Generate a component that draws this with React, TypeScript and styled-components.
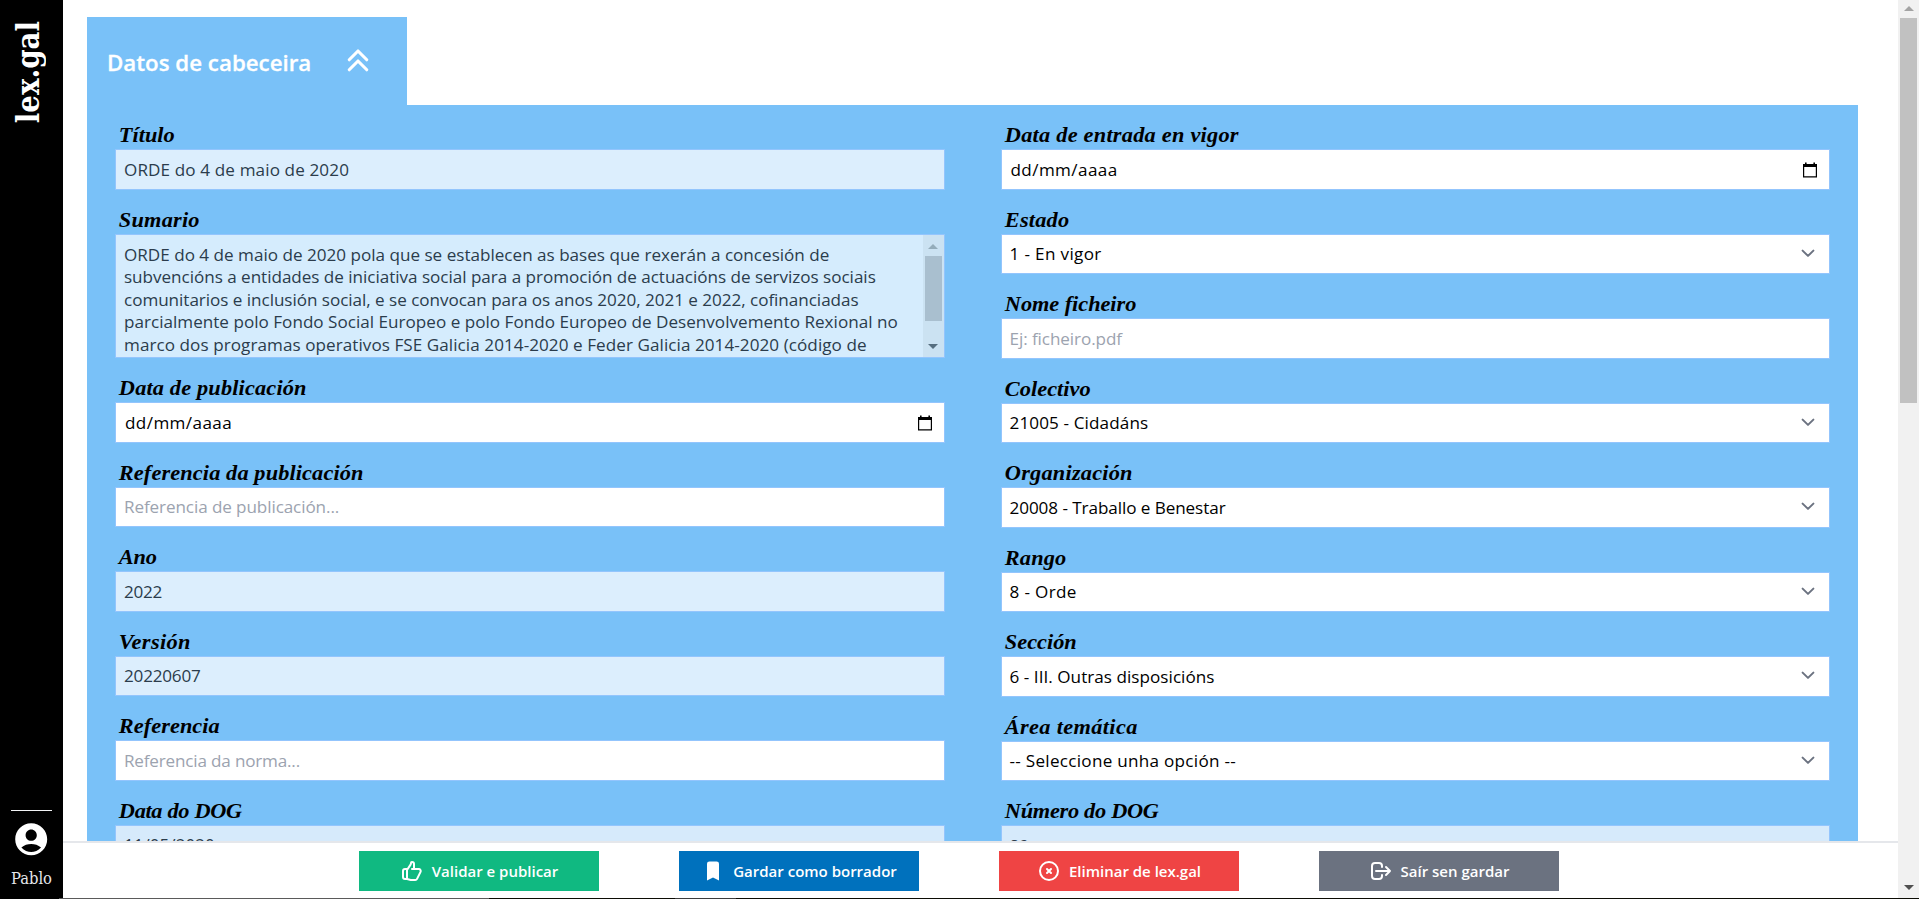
import React from "react";
import styled, { createGlobalStyle } from "styled-components";
import {
  HiBookmark,
  HiOutlineChevronDoubleUp,
  HiOutlineLogout,
  HiOutlineThumbUp,
  HiOutlineXCircle,
} from "react-icons/hi";
import { MdAccountCircle } from "react-icons/md";

const GlobalStyle = createGlobalStyle`
  *, *::before, *::after { box-sizing: border-box; }
  body { margin: 0; background: #fff; overflow: hidden; font-family: "Open Sans", "Noto Sans", sans-serif; }
`;

const Screen = styled.div`
  display: flex;
  flex-direction: column;
  width: 100vw;
  height: 100vh;
`;

const Workspace = styled.div`
  display: flex;
  flex: 1;
  min-height: 0;
`;

const Sidebar = styled.aside`
  display: flex;
  flex-direction: column;
  align-items: center;
  justify-content: space-between;
  width: 63px;
  background: #000;
  color: #fff;
  padding: 21px 0 7px;
`;

const Logo = styled.div`
  writing-mode: vertical-rl;
  transform: rotate(180deg);
  margin-right: 7px;
  font: 700 30.8px/36px "DejaVu Serif Condensed", "DejaVu Serif", serif;
  white-space: nowrap;
`;

const User = styled.div`
  display: flex;
  flex-direction: column;
  align-items: center;
  width: 41px;
  border-top: 1px solid #f3f4f6;
  padding-top: 9px;
  color: #e5e7eb;
  font: 400 16.4px/24px "DejaVu Serif Condensed", "DejaVu Serif", serif;

  svg { color: #fff; margin-bottom: 9px; flex: none; }
`;

const Main = styled.main`
  display: flex;
  flex-direction: column;
  flex: 1;
  min-width: 0;
`;

const Content = styled.div`
  flex: 1;
  min-height: 0;
  overflow: hidden;
  padding: 17px 40px 0 24px;
`;

const Tab = styled.header`
  display: flex;
  align-items: center;
  width: 320px;
  height: 88px;
  padding: 1px 34px 0 20px;
  justify-content: space-between;
  background: #79c1f8;
  color: #fff;

  svg { margin-bottom: 2px; }
`;

const TabTitle = styled.h1`
  margin: 2px 0 0;
  font-size: 22.3px;
  font-weight: 600;
  line-height: 32px;
  white-space: nowrap;
  -webkit-text-stroke: 0.3px #fff;
`;

const Panel = styled.section`
  display: grid;
  grid-template-columns: 1fr 1fr;
  column-gap: 56px;
  padding: 16px 28px;
  background: #79c1f8;
`;

const Column = styled.div`
  display: flex;
  flex-direction: column;
  gap: 16px;
`;

const Field = styled.div``;

const Label = styled.label<{ $spacing: number }>`
  display: block;
  height: 28px;
  padding-left: 3.5px;
  font: italic 700 20.3px/29px "Liberation Serif", serif;
  letter-spacing: ${(p) => p.$spacing}px;
  transform: scaleX(1.1);
  transform-origin: left;
  color: #000;
  white-space: nowrap;
`;

type Tone = "plain" | "locked" | "hint" | "dim";
const backgrounds: Record<Tone, string> = { plain: "#fff", hint: "#fff", locked: "#dceefd", dim: "#d6eafb" };
const colors: Record<Tone, string> = { plain: "#000", hint: "#9ca3af", locked: "#2b3c4c", dim: "#2b3c4c" };

const Box = styled.div<{ $tone: Tone }>`
  display: flex;
  align-items: center;
  justify-content: space-between;
  height: 40.5px;
  padding: 1.2px 12px 0 8px;
  border: 1px solid #93c5fd;
  background: ${(p) => backgrounds[p.$tone]};
  color: ${(p) => colors[p.$tone]};
  font-size: 17.1px;
  line-height: 24px;
  white-space: nowrap;
`;

const Value = styled.span<{ $spacing?: number; $date?: boolean }>`
  margin-left: ${(p) => (p.$date ? 1 : 0)}px;
  letter-spacing: ${(p) => p.$spacing ?? 0}px;
`;

const TextArea = styled.div`
  display: flex;
  height: 124.5px;
  overflow: hidden;
  border: 1px solid #93c5fd;
  background: #d5ecfd;
  color: #2b3c4c;
`;

const TextLines = styled.div`
  flex: 1;
  padding: 9px 0 0 8px;
  font-size: 17.1px;
  line-height: 22.6px;
  white-space: nowrap;
`;

const Line = styled.div<{ $spacing: number }>`
  letter-spacing: ${(p) => p.$spacing}px;
`;

const Scrollbar = styled.div<{ $inner?: boolean }>`
  display: flex;
  flex-direction: column;
  align-items: center;
  flex: none;
  width: 21px;
  padding: ${(p) => (p.$inner ? "9px 0 8px" : "6px 0 8px")};
  background: ${(p) => (p.$inner ? "#cbe2f2" : "#f1f1f1")};
`;

const Thumb = styled.div<{ $inner?: boolean }>`
  width: 17px;
  height: ${(p) => (p.$inner ? 65 : 385)}px;
  margin: 7px 0 auto;
  background: ${(p) => (p.$inner ? "#a9bfcf" : "#c1c1c1")};
`;

const Arrow = styled.i<{ $down?: boolean; $color: string }>`
  border: 5px solid transparent;
  border-top: ${(p) => (p.$down ? `5px solid ${p.$color}` : "0")};
  border-bottom: ${(p) => (p.$down ? "0" : `5px solid ${p.$color}`)};
`;

const ActionBar = styled.footer`
  display: flex;
  justify-content: center;
  gap: 80px;
  height: 57px;
  border-top: 2px solid #e5e7eb;
  padding-top: 8px;
  padding-right: 43px;
  background: #fff;
`;

const Action = styled.button<{ $bg: string }>`
  display: flex;
  align-items: center;
  justify-content: center;
  gap: 8px;
  width: 240px;
  height: 40px;
  border: 0;
  padding: 0;
  background: ${(p) => p.$bg};
  color: #fff;
  font: 600 15px/24px "Open Sans", sans-serif;
  white-space: nowrap;
`;

const BottomEdge = styled.div`
  height: 1px;
  background: linear-gradient(to right, #000 59px, #5a5a5a 59px 489px, #0c0c04 489px 675px, #3c3c3c 675px 736px, #0c0c04 736px);
`;

const CalendarIcon = () => (
  <svg width="14" height="16" viewBox="0 0 14 16">
    <path d="M0 2h14v13.5H0zM1.2 5v9.3h11.6V5z" fill="#000" fillRule="evenodd" />
    <path d="M2 .5h1.6V2H2zM10.4.5H12V2h-1.6z" fill="#000" />
  </svg>
);

const ChevronIcon = () => (
  <svg width="14" height="9" viewBox="0 0 14 9" fill="none" stroke="#6b7280" strokeWidth="2" strokeLinecap="round" strokeLinejoin="round">
    <path d="M1.6 1.6 7 6.9l5.4-5.3" />
  </svg>
);

const ChevronSlot = styled.span`
  display: flex;
  margin: -2px 2px 0 0;
`;

type FieldData = {
  label: string;
  spacing: number;
  value?: string;
  valueSpacing?: number;
  tone?: Tone;
  icon?: "date" | "select";
  lines?: [string, number][];
};

const left: FieldData[] = [
  { label: "Título", spacing: 0.02, value: "ORDE do 4 de maio de 2020", valueSpacing: 0.12, tone: "locked" },
  {
    label: "Sumario",
    spacing: 0.2,
    lines: [
      ["ORDE do 4 de maio de 2020 pola que se establecen as bases que rexerán a concesión de", 0],
      ["subvencións a entidades de iniciativa social para a promoción de actuacións de servizos sociais", -0.03],
      ["comunitarios e inclusión social, e se convocan para os anos 2020, 2021 e 2022, cofinanciadas", -0.04],
      ["parcialmente polo Fondo Social Europeo e polo Fondo Europeo de Desenvolvemento Rexional no", 0.01],
      ["marco dos programas operativos FSE Galicia 2014-2020 e Feder Galicia 2014-2020 (código de", 0.06],
    ],
  },
  { label: "Data de publicación", spacing: 0.15, value: "dd/mm/aaaa", valueSpacing: 0.4, icon: "date" },
  { label: "Referencia da publicación", spacing: 0.11, value: "Referencia de publicación...", valueSpacing: -0.1, tone: "hint" },
  { label: "Ano", spacing: -0.15, value: "2022", valueSpacing: -0.25, tone: "locked" },
  { label: "Versión", spacing: 0.32, value: "20220607", valueSpacing: -0.2, tone: "locked" },
  { label: "Referencia", spacing: 0.05, value: "Referencia da norma...", valueSpacing: -0.18, tone: "hint" },
  { label: "Data do DOG", spacing: -0.29, value: "11/05/2020", tone: "dim" },
];

const right: FieldData[] = [
  { label: "Data de entrada en vigor", spacing: 0.22, value: "dd/mm/aaaa", valueSpacing: 0.4, icon: "date" },
  { label: "Estado", spacing: 0.18, value: "1 - En vigor", valueSpacing: 0.35, icon: "select" },
  { label: "Nome ficheiro", spacing: -0.04, value: "Ej: ficheiro.pdf", valueSpacing: -0.08, tone: "hint" },
  { label: "Colectivo", spacing: 0.04, value: "21005 - Cidadáns", valueSpacing: 0.12, icon: "select" },
  { label: "Organización", spacing: 0.2, value: "20008 - Traballo e Benestar", valueSpacing: -0.07, icon: "select" },
  { label: "Rango", spacing: 0.12, value: "8 - Orde", valueSpacing: 0.35, icon: "select" },
  { label: "Sección", spacing: 0, value: "6 - III. Outras disposicións", valueSpacing: 0.04, icon: "select" },
  { label: "Área temática", spacing: 0.32, value: "-- Seleccione unha opción --", valueSpacing: 0.28, icon: "select" },
  { label: "Número do DOG", spacing: -0.25, value: "89", tone: "dim" },
];

const FormField = ({ data }: { data: FieldData }) => (
  <Field>
    <Label $spacing={data.spacing}>{data.label}</Label>
    {data.lines ? (
      <TextArea>
        <TextLines>
          {data.lines.map(([text, spacing]) => (
            <Line key={text} $spacing={spacing}>{text}</Line>
          ))}
        </TextLines>
        <Scrollbar $inner>
          <Arrow $color="#94acba" />
          <Thumb $inner />
          <Arrow $down $color="#566e80" />
        </Scrollbar>
      </TextArea>
    ) : (
      <Box $tone={data.tone ?? "plain"}>
        <Value $spacing={data.valueSpacing} $date={data.icon === "date"}>{data.value}</Value>
        {data.icon === "date" && <CalendarIcon />}
        {data.icon === "select" && <ChevronSlot><ChevronIcon /></ChevronSlot>}
      </Box>
    )}
  </Field>
);

export default function App() {
  return (
    <Screen>
      <GlobalStyle />
      <Workspace>
        <Sidebar>
          <Logo>lex.gal</Logo>
          <User>
            <MdAccountCircle size={38.4} />
            Pablo
          </User>
        </Sidebar>
        <Main>
          <Content>
            <Tab>
              <TabTitle>Datos de cabeceira</TabTitle>
              <HiOutlineChevronDoubleUp size={30} strokeWidth={2.5} />
            </Tab>
            <Panel>
              <Column>{left.map((f) => <FormField key={f.label} data={f} />)}</Column>
              <Column>{right.map((f) => <FormField key={f.label} data={f} />)}</Column>
            </Panel>
          </Content>
          <ActionBar>
            <Action $bg="#10b981"><HiOutlineThumbUp size={24} />Validar e publicar</Action>
            <Action $bg="#0071bd"><HiBookmark size={24} />Gardar como borrador</Action>
            <Action $bg="#ef4444"><HiOutlineXCircle size={24} />Eliminar de lex.gal</Action>
            <Action $bg="#6b7280"><HiOutlineLogout size={24} />Saír sen gardar</Action>
          </ActionBar>
        </Main>
        <Scrollbar>
          <Arrow $color="#a3a3a3" />
          <Thumb />
          <Arrow $down $color="#505050" />
        </Scrollbar>
      </Workspace>
      <BottomEdge />
    </Screen>
  );
}
